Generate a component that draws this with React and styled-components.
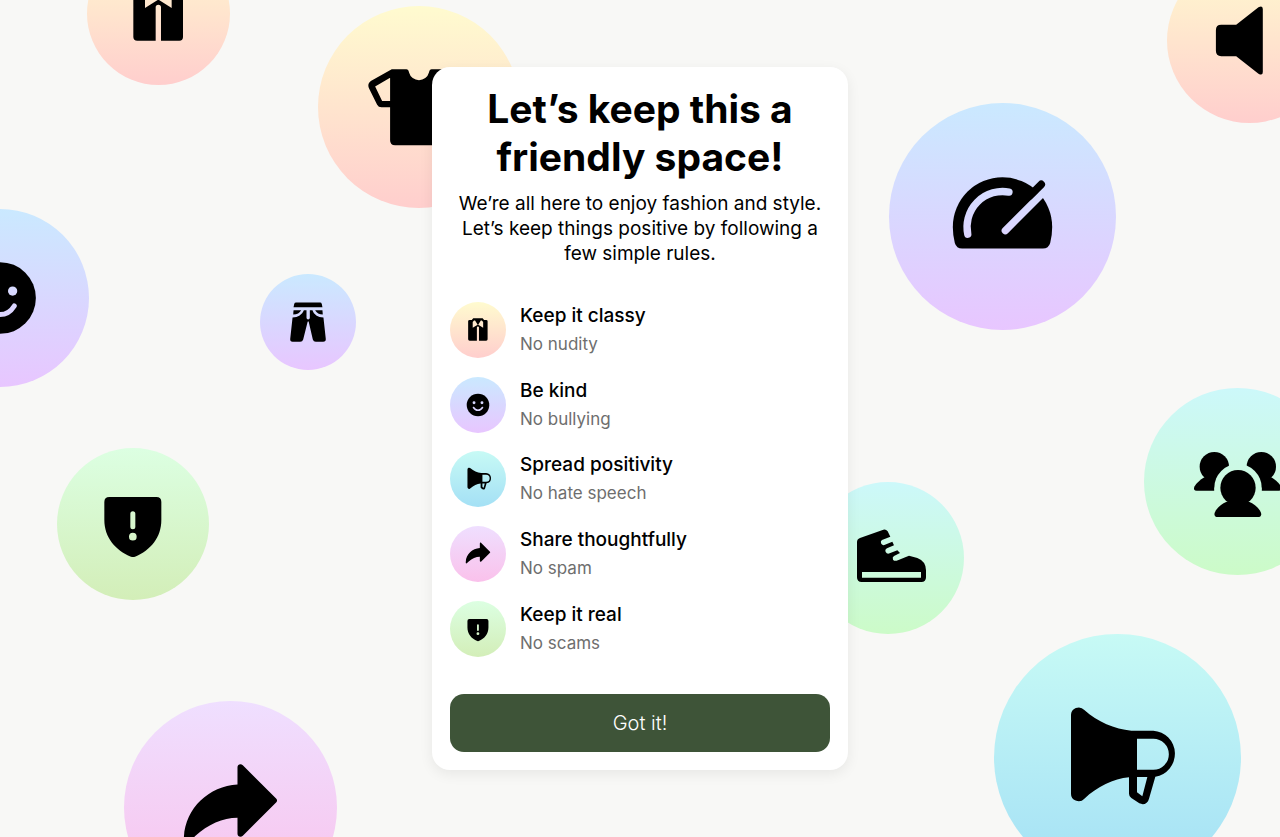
import * as React from "react";
import styled, { createGlobalStyle } from "styled-components";

const gradients = {
  peach: "#fffbcf, #ffcecd",
  sky: "#cae9ff, #e8c6ff",
  lime: "#dcffe2, #d3eeb8",
  pink: "#efdfff, #fac1eb",
  aqua: "#c7faf5, #a4e0f5",
  mint: "#ccf8fa, #ccfbc8",
};

function JacketIcon() {
  return (
    <svg viewBox="0 0 429 429" aria-hidden="true">
      <path
        fillRule="evenodd"
        d="M151 137H167L178 125H250L261 137H277Q288 137 288 148V285Q288 296 277 296H222V196Q222 188 214 188Q206 188 206 196V296H151Q139 296 139 285V148Q139 137 151 137ZM184 141L174 153V198L212 174L192 141ZM244 141L236 141L216 174L254 198V153Z"
      />
    </svg>
  );
}

function SmileIcon() {
  return (
    <svg viewBox="0 0 536 536" aria-hidden="true">
      <mask id="smile-face">
        <rect width="536" height="536" fill="#fff" />
        <circle cx="230" cy="247" r="14" />
        <circle cx="306" cy="247" r="14" />
        <path
          d="M225 292Q241 318 268 318Q295 318 311 292"
          fill="none"
          stroke="#000"
          strokeWidth="15"
          strokeLinecap="round"
        />
      </mask>
      <circle cx="268" cy="268" r="108" mask="url(#smile-face)" />
    </svg>
  );
}

function MegaphoneIcon() {
  return (
    <svg viewBox="0 0 741 741" aria-hidden="true">
      <path
        fillRule="evenodd"
        d="M231 244A23 23 0 0 1 271 228C310 263 362 286 412 290H478A69.500 69.500 0 0 1 484 428L465 494C461 509 449 514 436 508L412 492Q405 487 405 479V430C358 434 310 459 271 494A23 23 0 0 1 231 477ZM429 314V407H478A46 46 0 0 0 478 314ZM429 429V475L445 487L460 429Z"
      />
    </svg>
  );
}

function ShareIcon() {
  return (
    <svg viewBox="0 0 640 640" aria-hidden="true">
      <path d="M341 251V199C341 190 351 187 357 193L457 293Q463 299 457 305L357 405C351 411 341 408 341 399V351C297 351 252 371 214 406L195 424C188 430 180 427 180 419V410C184 322 255 256 341 251Z" />
    </svg>
  );
}

function ShieldIcon() {
  return (
    <svg viewBox="0 0 456 456" aria-hidden="true">
      <path
        fillRule="evenodd"
        d="M157 147H298Q313 147 313 162V216C313 268 281 307 234 326Q228 328 222 326C175 307 142 268 142 216V162Q142 147 157 147ZM220 197V236A7.500 7.500 0 0 0 235 236V197A7.500 7.500 0 0 0 220 197ZM216 266A11.500 11.500 0 1 0 239 266A11.500 11.500 0 1 0 216 266Z"
      />
    </svg>
  );
}

function ShirtIcon() {
  return (
    <svg viewBox="0 0 608 608" aria-hidden="true">
      <path
        fillRule="evenodd"
        d="M222 190H266Q272 190 274 200A31 31 0 0 0 334 200Q336 190 342 190H386L449 226Q461 234 456 247L430 297Q426 305 417 305H391V404Q391 419 376 419H232Q217 419 217 404V305H191Q182 305 178 297L153 247Q148 234 159 226ZM217 216L172 242L193 286H217ZM391 216V286H415L436 242Z"
      />
    </svg>
  );
}

function PantsIcon() {
  return (
    <svg viewBox="0 0 289 289" aria-hidden="true">
      <path d="M109 86H181Q185 86 186 90L188 100H101L103 90Q104 86 109 86Z" />
      <path d="M101 109H124C120 117 111 122 100 122Z" />
      <path d="M188 109H166C170 117 179 122 189 122Z" />
      <path d="M132 109H140V132Q140 137 145 137Q150 137 150 132V109H158C162 122 174 130 191 131L198 195Q199 204 190 204H168Q161 204 159 197L147 145Q145 139 143 145L130 197Q128 204 121 204H98Q90 204 91 195L98 131C115 130 127 122 132 109Z" />
    </svg>
  );
}

function GaugeIcon() {
  return (
    <svg viewBox="0 0 683 683" aria-hidden="true">
      <mask id="gauge-dial">
        <rect width="683" height="683" fill="#fff" />
        <g fill="none" stroke="#000" strokeWidth="22" strokeLinecap="round">
          <path d="M237 395A107 107 0 0 1 361 268" />
          <path d="M350 384L530 204" />
        </g>
      </mask>
      <path
        mask="url(#gauge-dial)"
        d="M192 373A149.500 149.500 0 0 1 491 373Q491 397 485 421Q480 438 463 438H220Q203 438 198 421Q192 397 192 373Z"
      />
      <path d="M422 281L458 245" stroke="#000" strokeWidth="23" strokeLinecap="round" />
    </svg>
  );
}

function SpeakerIcon() {
  return (
    <svg viewBox="0 0 496 496" aria-hidden="true">
      <path d="M163 201H208L275 148Q288 141 288 153V343Q288 355 275 348L208 295H163Q147 295 147 279V217Q147 201 163 201Z" />
    </svg>
  );
}

function SneakerIcon() {
  return (
    <svg viewBox="0 0 456 456" aria-hidden="true">
      <path
        fillRule="evenodd"
        d="M144 168L214 143Q221 140 227 148L235 164L210 174Q205 177 207 184Q210 191 217 189L241 179L246 190L225 199Q218 203 221 210Q225 217 233 214L256 205L264 213L246 222Q240 226 243 233Q247 238 254 236L291 221L316 228Q342 238 342 265V286Q342 300 328 300H149Q135 300 135 286V180Q135 171 144 168ZM150 270V287H327V270Z"
      />
    </svg>
  );
}

function PeopleIcon() {
  return (
    <svg viewBox="0 0 561 561" aria-hidden="true">
      <mask id="people-front">
        <rect width="561" height="561" fill="#fff" />
        <circle cx="282" cy="299" r="71" />
        <rect x="211" y="299" width="142" height="100" />
      </mask>
      <g mask="url(#people-front)">
        <circle cx="211" cy="236" r="44" />
        <circle cx="352" cy="236" r="44" />
        <path d="M181 268C168 276 157 286 151 296Q147 308 158 308H240V268Z" />
        <path d="M382 268C395 276 406 286 412 296Q416 308 405 308H323V268Z" />
      </g>
      <circle cx="282" cy="299" r="53" />
      <path d="M248 341H315C331 347 345 360 351 374Q354 387 341 387H222Q209 387 212 374C218 360 232 347 248 341Z" />
    </svg>
  );
}

// x and y are offsets of the bubble's centre from the middle of the window
const bubbles = [
  { id: "jacket", tone: "peach", size: 143, x: -482, y: -405, icon: <JacketIcon /> },
  { id: "shirt", tone: "peach", size: 202, x: -221, y: -312, icon: <ShirtIcon /> },
  { id: "smile", tone: "sky", size: 178, x: -640, y: -121, icon: <SmileIcon /> },
  { id: "pants", tone: "sky", size: 96, x: -332, y: -97, icon: <PantsIcon /> },
  { id: "shield", tone: "lime", size: 152, x: -507, y: 105, icon: <ShieldIcon /> },
  { id: "share", tone: "pink", size: 213, x: -410, y: 389, icon: <ShareIcon /> },
  { id: "speaker", tone: "peach", size: 165, x: 609, y: -378, icon: <SpeakerIcon /> },
  { id: "gauge", tone: "sky", size: 227, x: 362, y: -202, icon: <GaugeIcon /> },
  { id: "people", tone: "mint", size: 187, x: 597, y: 63, icon: <PeopleIcon /> },
  { id: "sneaker", tone: "mint", size: 152, x: 248, y: 139, icon: <SneakerIcon /> },
  { id: "megaphone", tone: "aqua", size: 247, x: 477, y: 339, icon: <MegaphoneIcon /> },
];

const rules = [
  { title: "Keep it classy", note: "No nudity", tone: "peach", icon: <JacketIcon /> },
  { title: "Be kind", note: "No bullying", tone: "sky", icon: <SmileIcon /> },
  { title: "Spread positivity", note: "No hate speech", tone: "aqua", icon: <MegaphoneIcon /> },
  { title: "Share thoughtfully", note: "No spam", tone: "pink", icon: <ShareIcon /> },
  { title: "Keep it real", note: "No scams", tone: "lime", icon: <ShieldIcon /> },
];

export default function App() {
  return (
    <>
      <GlobalStyle />
      <Page>
        <Backdrop aria-hidden="true">
          {bubbles.map((b) => (
            <Bubble key={b.id} $tone={b.tone} $size={b.size} $x={b.x} $y={b.y}>
              {b.icon}
            </Bubble>
          ))}
        </Backdrop>
        <Card>
          <Title>Let’s keep this a friendly space!</Title>
          <Intro>
            We’re all here to enjoy fashion and style. Let’s keep things
            positive by following a few simple rules.
          </Intro>
          <RuleList>
            {rules.map((rule) => (
              <Rule key={rule.title}>
                <Badge $tone={rule.tone} $size={56}>
                  {rule.icon}
                </Badge>
                <RuleText>
                  <RuleTitle>{rule.title}</RuleTitle>
                  <RuleNote>{rule.note}</RuleNote>
                </RuleText>
              </Rule>
            ))}
          </RuleList>
          <ConfirmButton type="button">Got it!</ConfirmButton>
        </Card>
      </Page>
    </>
  );
}

const GlobalStyle = createGlobalStyle`
  * {
    box-sizing: border-box;
  }

  body {
    margin: 0;
    background: #f8f8f6;
    color: #000;
    font-family: Inter, "Liberation Sans", sans-serif;
  }
`;

const Page = styled.main`
  position: relative;
  display: flex;
  align-items: center;
  justify-content: center;
  min-height: 100vh;
  overflow: hidden;
`;

const Backdrop = styled.div`
  position: absolute;
  inset: 0;
`;

const Badge = styled.div`
  flex: none;
  width: ${(p) => p.$size}px;
  height: ${(p) => p.$size}px;
  border-radius: 50%;
  background: linear-gradient(${(p) => gradients[p.$tone]});

  svg {
    display: block;
    width: 100%;
    height: 100%;
  }
`;

const Bubble = styled(Badge)`
  position: absolute;
  left: calc(50% + ${(p) => p.$x - p.$size / 2}px);
  top: calc(50% + ${(p) => p.$y - p.$size / 2}px);
`;

const Card = styled.section`
  position: relative;
  display: flex;
  flex-direction: column;
  width: 100%;
  max-width: 416px;
  min-height: 84vh;
  padding: 18px;
  border-radius: 18px;
  background: #fff;
  box-shadow: 0 4px 14px rgba(0, 0, 0, 0.07);
`;

const Title = styled.h1`
  margin: 0 24px;
  font-size: 39px;
  font-weight: 700;
  line-height: 48px;
  text-align: center;
`;

const Intro = styled.p`
  margin: 10px 0 36px;
  font-size: 19px;
  font-weight: 400;
  line-height: 25px;
  text-align: center;
`;

const RuleList = styled.ul`
  display: flex;
  flex: 1;
  flex-direction: column;
  justify-content: space-between;
  gap: 18px;
  margin: 0;
  padding: 0;
  list-style: none;
`;

const Rule = styled.li`
  display: flex;
  align-items: center;
  gap: 14px;
`;

const RuleText = styled.div`
  display: flex;
  flex-direction: column;
`;

const RuleTitle = styled.span`
  font-size: 19px;
  font-weight: 500;
  line-height: 28px;
`;

const RuleNote = styled.span`
  color: #6e6e6e;
  font-size: 17px;
  font-weight: 400;
  line-height: 28px;
`;

const ConfirmButton = styled.button`
  width: 100%;
  height: 58px;
  margin-top: 37px;
  border: 0;
  border-radius: 14px;
  background: #3e5438;
  color: #fff;
  font: inherit;
  font-size: 20px;
  font-weight: 300;
  line-height: 25px;
  cursor: pointer;
`;
